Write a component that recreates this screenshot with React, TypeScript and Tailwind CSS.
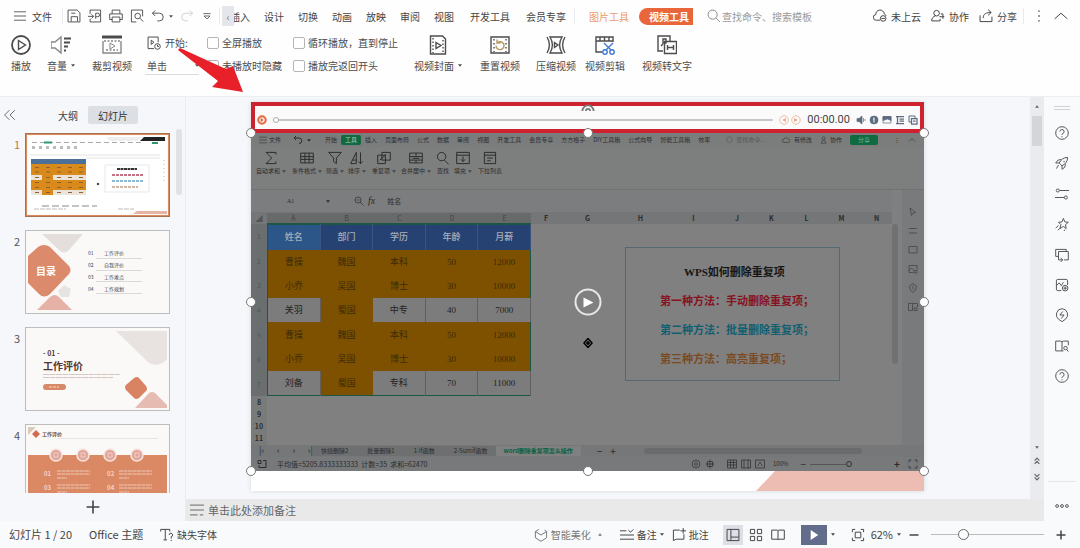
import { useState } from "react";
import type { ReactNode } from "react";
import clsx from "clsx";

type IconProps = { className?: string; children: ReactNode };

const Icon = ({ className, children }: IconProps) => (
  <svg
    viewBox="0 0 20 20"
    fill="none"
    stroke="currentColor"
    strokeWidth="1.4"
    className={clsx("shrink-0", className)}
    aria-hidden="true"
  >
    {children}
  </svg>
);

const Caret = ({ className }: { className?: string }) => (
  <svg viewBox="0 0 6 4" fill="currentColor" className={clsx("h-[3px] w-1 shrink-0", className)} aria-hidden="true">
    <path d="M0 0h6L3 4z" />
  </svg>
);

const Divider = () => <span className="h-4 w-px shrink-0 bg-[#e8eaed]" />;

const tabs = ["设计", "切换", "动画", "放映", "审阅", "视图"];

function MenuBar() {
  return (
    <nav className="flex h-8 items-center whitespace-nowrap">
      <button className="flex w-[62px] items-center gap-1.5 pl-3.5">
        <Icon className="h-3 w-3">
          <path d="M0 3h20M0 10h20M0 17h20" />
        </Icon>
        文件
      </button>
      <Divider />
      <div className="flex items-center gap-[7px] pl-1 text-[#555]">
        <button aria-label="保存">
          <Icon className="h-3.5 w-3.5">
            <path d="M1.500 1.500h13l4 4v13h-17zM6 18v-7h9v7M6 6h6" />
          </Icon>
        </button>
        <button aria-label="输出为PDF">
          <Icon className="h-3.5 w-3.5">
            <path d="M3 7V1.500h15v17H3V14M0 10.500h8M5 7.500l3 3-3 3M11 14V6h3a2 2 0 0 1 0 5h-3" />
          </Icon>
        </button>
        <button aria-label="打印">
          <Icon className="h-3.5 w-3.5">
            <path d="M4.500 7V1.500h11V7M4.500 15H1V7h18v8h-3.500M4.500 11.500h11v7h-11z" />
          </Icon>
        </button>
        <button aria-label="打印预览">
          <Icon className="h-3.5 w-3.5">
            <path d="M9 18.500H2v-17h16v9" />
            <circle cx="11" cy="10" r="4" />
            <path d="M14 13l5 5" />
          </Icon>
        </button>
        <button aria-label="撤销" className="flex items-center gap-1">
          <Icon className="h-3.5 w-3.5">
            <path d="M6 2L2 6l4 4M2 6h10a5.500 5.500 0 0 1 0 11H9" />
          </Icon>
          <Caret />
        </button>
        <button aria-label="恢复" className="text-[#d0d0d0]">
          <Icon className="h-3.5 w-3.5">
            <path d="M14 2l4 4-4 4M18 6H8a5.500 5.500 0 0 0 0 11h3" />
          </Icon>
        </button>
        <button aria-label="自定义快速访问">
          <Icon className="h-3 w-3">
            <path d="M4 6h12M5 10h10l-5 5z" />
          </Icon>
        </button>
      </div>
      <span className="w-1.5" />
      <Divider />
      <button
        aria-label="向左滚动"
        className="relative z-10 ml-0.5 h-5 w-3 shrink-0 bg-[#e4e6eb] text-center text-[#777]"
      >
        ‹
      </button>
      {/* the strip is scrolled a little, so the first tab slides under the arrow */}
      <button className="-ml-1 shrink-0">插入</button>
      <div className="flex gap-3.5 pl-3.5">
        {tabs.map((tab) => (
          <button key={tab}>{tab}</button>
        ))}
      </div>
      <div className="flex gap-4 pr-2 pl-4">
        <button>开发工具</button>
        <button>会员专享</button>
      </div>
      <Divider />
      <button className="pr-2.5 pl-3.5 text-[#ee9a6d]">图片工具</button>
      <button className="h-[17px] rounded-l-full rounded-r-xs bg-[#e8663a] pr-1 pl-2.5 font-bold text-white">
        视频工具
      </button>
      <label className="flex items-center gap-px pl-3.5 text-[#888]">
        <Icon className="h-3.5 w-3.5">
          <circle cx="8" cy="8" r="6.500" />
          <path d="M13 13l5.500 5.500" />
        </Icon>
        <input
          aria-label="查找命令、搜索模板"
          placeholder="查找命令、搜索模板"
          className="w-24 bg-transparent outline-none placeholder:text-[#999]"
        />
      </label>
      <div className="ml-auto flex items-center gap-2.5">
        <button className="flex items-center gap-1">
          <Icon className="h-3.5 w-3.5">
            <path d="M10 16H5a4 4 0 0 1-1-8 6 6 0 0 1 12-1c1.500.5 2.500 2 2.500 3" />
            <circle cx="14.500" cy="13.500" r="4" />
            <path d="M12 13.500h5" />
          </Icon>
          未上云
        </button>
        <button className="flex items-center gap-1">
          <Icon className="h-3.5 w-3.5">
            <circle cx="8" cy="6" r="4" />
            <path d="M6 10c-3 1-5 3-5 7h12v-3M14 7h3v7M12 11h7" />
          </Icon>
          协作
        </button>
        <button className="flex items-center gap-1">
          <Icon className="h-3.5 w-3.5">
            <path d="M1.500 9v9h17v-7M6 13c0-6 4-8 11-8M13 1l4.500 4L13 9" />
          </Icon>
          分享
        </button>
      </div>
      <span className="w-1.5" />
      <Divider />
      <button aria-label="更多" className="ml-2">
        <Icon className="h-3.5 w-3.5">
          <path d="M10 2v2M10 9v2M10 16v2" strokeWidth="2" />
        </Icon>
      </button>
      <button aria-label="收起功能区" className="mr-3 ml-2">
        <Icon className="h-3.5 w-3.5">
          <path d="M1 14l9-8 9 8" />
        </Icon>
      </button>
    </nav>
  );
}

type ToolProps = { label: string; width: string; caret?: boolean; children: ReactNode };

const Tool = ({ label, width, caret, children }: ToolProps) => (
  <button className={clsx("flex shrink-0 flex-col items-center gap-[3px] whitespace-nowrap", width)}>
    <Icon className="h-5 w-5">{children}</Icon>
    <span className="flex items-center gap-1">
      {label}
      {caret && <Caret />}
    </span>
  </button>
);

const Check = ({ label }: { label: string }) => (
  <label className="flex items-center gap-[3px] whitespace-nowrap">
    <input type="checkbox" className="h-3 w-3 appearance-none rounded-xs border border-[#b5b5b5] bg-white" />
    {label}
  </label>
);

function Ribbon() {
  return (
    <div className="flex h-16 items-start pt-[3px] text-[#4c4c4c]">
      <Tool label="播放" width="w-[42px]">
        <circle cx="10" cy="10" r="9" strokeWidth="1.800" />
        <path d="M7.500 5.500l7 4.500-7 4.500z" />
      </Tool>
      <Tool label="音量" width="w-[38px]" caret>
        <path d="M0 7h4l6-5v16l-6-5H0z" stroke="#888" />
        <path d="M13 3.500h7M13 7.500h6M13 11.500h4M13 15.500h2" strokeWidth="1.800" />
      </Tool>
      <Tool label="裁剪视频" width="w-[64px]">
        <path d="M0 2h20" strokeWidth="3" />
        <path d="M1 6v12h18V6" stroke="#888" />
        <path d="M2 6h16M4 15h12" strokeDasharray="2 1.500" stroke="#888" />
        <path d="M8 8l5 3-5 3z" strokeWidth="1" stroke="#888" />
      </Tool>
      <div className="flex w-[55px] flex-col gap-2 pl-px">
        <span className="flex items-center gap-1 pl-0.5 whitespace-nowrap">
          <Icon className="h-3.5 w-3.5">
            <path d="M10 18H1.500V1.500H16V9M6 6l4 3-4 3z" />
            <circle cx="15" cy="15" r="4" />
            <path d="M15 12.500V15h2" />
          </Icon>
          <label htmlFor="start">开始:</label>
        </span>
        <span className="flex items-center border-b border-[#dcdcdc] pb-px">
          <select id="start" className="w-full appearance-none bg-transparent pl-0.5 outline-none">
            <option>单击</option>
          </select>
          <Caret />
        </span>
      </div>
      <div className="flex flex-col gap-2 pl-2">
        <Check label="全屏播放" />
        <Check label="未播放时隐藏" />
      </div>
      <div className="flex w-[123px] flex-col gap-2 pl-[11px]">
        <Check label="循环播放，直到停止" />
        <Check label="播放完返回开头" />
      </div>
      <Tool label="视频封面" width="w-[66px]" caret>
        <path d="M2.500 1h12l3 3v15h-15z" />
        <path d="M5 3v15M15 5v13" strokeDasharray="1.500 2" />
        <path d="M8 7.500l5 3-5 3z" />
      </Tool>
      <Tool label="重置视频" width="w-[58px]">
        <path d="M1 2h18v16H1z" />
        <path d="M4 4v13M16 4v13" strokeDasharray="1.500 2.500" />
        <path d="M7.500 7.500a4 4 0 1 1-1.500 3M7 4.500v3.500h3.500" stroke="#b89a62" />
      </Tool>
      <Tool label="压缩视频" width="w-[54px]">
        <path d="M1 2c3 5 3 11 0 16M4 2c3 5 3 11 0 16h12c-3-5-3-11 0-16zM19 2c-3 5-3 11 0 16M8.500 7.500l3.500 2.500-3.500 2.500z" />
      </Tool>
      <Tool label="视频剪辑" width="w-[44px]">
        <path d="M7 17H1V2h17v5M1 6h17M5 2v4M9.500 2v4M14 2v4" />
        <path d="M9 8l7 7M18 8l-7 7" stroke="#3f7ad0" />
        <circle cx="10" cy="17" r="2.200" stroke="#3f7ad0" />
        <circle cx="17" cy="17" r="2.200" stroke="#3f7ad0" />
      </Tool>
      <Tool label="视频转文字" width="w-[80px]">
        <path d="M6 16H1V1h12v5M4 11l2-2M6 4h3v4H6z" />
        <path d="M7.500 6.500h12v12h-12zM10.500 10v5M16.500 10v5M10.500 12.500h6" />
      </Tool>
    </div>
  );
}

type ThumbProps = { index: number; active?: boolean; children: ReactNode };

const Thumb = ({ index, active, children }: ThumbProps) => (
  <li className="flex gap-[5px] pl-3.5">
    <span className={clsx("w-1.5 pt-1 text-[11px]", active ? "text-[#c9704a]" : "text-[#555]")}>{index}</span>
    <div
      className={clsx(
        "relative h-[84px] w-[145px] shrink-0 overflow-hidden border bg-[#fbf9f8]",
        active ? "outline -outline-offset-2 outline-[#d98b5c] border-[#a8724f]" : "border-[#bdbdbd]"
      )}
    >
      {children}
    </div>
  </li>
);

// every slide preview is drawn on a 143 x 82 canvas
const Art = ({ children }: { children: ReactNode }) => (
  <svg viewBox="0 0 143 82" className="absolute inset-0 h-full w-full" aria-hidden="true">
    {children}
  </svg>
);

const agenda = ["工作评价", "自我评价", "工作难点", "工作规划"];

function SlidePanel() {
  return (
    <aside className="flex w-[186px] shrink-0 flex-col border-r border-[#e9ebee]">
      <div className="flex h-9 items-center pl-1">
        <button aria-label="收起窗格" className="w-[46px] text-[#555]">
          <Icon className="h-3 w-3">
            <path d="M9 2l-8 8 8 8M18 2l-8 8 8 8" />
          </Icon>
        </button>
        <button className="pl-2">大纲</button>
        <button className="ml-2.5 h-[18px] rounded-xs bg-[#dcdfe4] px-2.5 text-[#333]">幻灯片</button>
      </div>
      <div className="flex min-h-0 flex-1">
        <ul className="flex w-[174px] flex-col gap-[13px] overflow-hidden">
          <Thumb index={1} active>
            <Art>
              <path d="M2 2h139v78H2z" fill="#fff" />
              <path d="M80 3h37l-6 4H84z" fill="#eee" />
              <path d="M118 3h21v4h-25z" fill="#222" />
              <path d="M6 8.500h110" stroke="#aaa" strokeDasharray="5 3" strokeWidth="1" />
              <path d="M18 8.500h8M126 9h6" stroke="#2c9a6b" strokeWidth="2" />
              <path d="M6 13.500h48" stroke="#bbb" strokeDasharray="3 4" strokeWidth="3" />
              <path d="M4 21h130M60 24h74" stroke="#e4e4e4" />
              <path d="M5 25h55v5H5z" fill="#4c7097" />
              <path d="M5 30h55v31H5z" fill="#d98a1b" />
              <path d="M5 41h11v5H5zM27 41h33v5H27zM5 56h11v5H5zM27 56h33v5H27z" fill="#ece4d8" />
              <path d="M9 33.500h48M9 38h48M9 43.500h48M9 48.500h48M9 53.500h48M9 58.500h48" stroke="#8b6233" strokeDasharray="4 7" />
              <path d="M79 31h44v27H79z" fill="#fff" stroke="#e1e9ed" />
              <path d="M91 35h20" stroke="#333" strokeDasharray="3 .5" strokeWidth="2" />
              <path d="M86 41h31" stroke="#b0455b" strokeDasharray="3 1" strokeWidth="1.500" />
              <path d="M86 47h31" stroke="#63a3bf" strokeDasharray="3 1" strokeWidth="1.500" />
              <path d="M86 53h26" stroke="#c2a187" strokeDasharray="3 1" strokeWidth="1.500" />
              <circle cx="72" cy="50" r="1.200" fill="#444" />
              <path d="M16 72h55" stroke="#888" strokeDasharray="7 3" />
              <path d="M8 75h32M92 75h16" stroke="#bbb" strokeDasharray="5 1" />
              <path d="M138 26v22" stroke="#bbb" strokeDasharray="1 3" />
              <path d="M111 77h30v3h-34z" fill="#e5b4a4" />
            </Art>
          </Thumb>
          <Thumb index={2}>
            <Art>
              <path d="M16 3h41L42 20q-4 3-8 0z" fill="#e4dfdd" />
              <path d="M2 25l10-9q6-4 12 0l19 19q3 4 0 8L24 63q-6 5-11 0L2 52z" fill="#db8a6b" />
              <path d="M32 60l6-6 7 4-2 8h-8z" fill="#e7e3e0" />
              <path d="M11 79l13-13q5-4 9 0l13 13z" fill="#e6b2a8" />
              <path d="M70 27.500h46M70 39.500h46M70 50.500h46M70 62.500h46" stroke="#cfcac7" strokeWidth=".7" />
            </Art>
            <p className="absolute top-8 left-2.5 font-bold text-white">目录</p>
            <ol className="absolute top-[18px] left-[62px] flex flex-col gap-1 text-[5px]/2">
              {agenda.map((item, i) => (
                <li key={item} className="flex gap-2.5">
                  <span className="w-1.5">0{i + 1}</span>
                  {item}
                </li>
              ))}
            </ol>
          </Thumb>
          <Thumb index={3}>
            <Art>
              <path d="M90 3h51v28q-8 9-18 4z" fill="#e8e2e0" />
              <path d="M100 57l8-7q3-2 5 0l7 8q2 3 0 5l-7 7q-3 2-5 0l-8-8q-2-3 0-5z" fill="#d98363" />
              <path d="M109 80l14-15q3-2 6 0l12 12v3z" fill="#e6bcb2" />
              <path d="M17 46.500h77M17 49.500h70" stroke="#cbb9b2" strokeWidth=".8" strokeDasharray="6 .5" />
              <rect x="17" y="56" width="23" height="6" rx="3" fill="#d78968" />
              <path d="M23 59h10" stroke="#f3d9cd" strokeDasharray="3 1" />
            </Art>
            <div className="absolute top-5 left-[17px] text-[#553630]">
              <p className="text-[7px]/[10px] font-bold">- 01 -</p>
              <p className="font-bold">工作评价</p>
            </div>
          </Thumb>
          <Thumb index={4}>
            <Art>
              <path d="M2 30h139v52H2z" fill="#db8865" />
              <path d="M2 2h8L2 10z" fill="#dbc9b9" />
              <path d="M6 9l4-4 4 4-4 4z" fill="#d46a4e" />
              <path d="M32 13.500h100" stroke="#ddd" strokeWidth=".7" />
              {[30, 57, 84, 111].map((cx) => (
                <g key={cx}>
                  <circle cx={cx} cy="30" r="6" fill="#e2a79c" stroke="#f6e6df" strokeWidth="1.500" />
                  <path d={`M${cx - 2} 28h4v4h-4z`} stroke="#f4dcd5" fill="none" strokeWidth=".7" />
                </g>
              ))}
              <path
                d="M31 46h33M31 49h33M31 53h10M93 46h33M93 49h33M93 53h10M31 60h33M31 63h33M93 60h33M93 63h33M31 67h10M93 67h10"
                stroke="#efc9b8"
                strokeDasharray="4 .5"
              />
            </Art>
            <p className="absolute top-1 left-4 text-[5px]/[10px] font-bold text-[#664a44]">工作评价</p>
            <div className="absolute top-11 left-[18px] grid grid-cols-2 gap-x-14 gap-y-1 text-[6px]/[10px] font-bold text-[#f3d3c5]">
              <span>01</span>
              <span>02</span>
              <span>03</span>
              <span>04</span>
            </div>
          </Thumb>
        </ul>
        <span className="-mt-1 ml-0.5 h-[66px] w-1.5 rounded-full bg-[#e0e2e5]" />
      </div>
      <button aria-label="新建幻灯片" className="flex h-7 items-center justify-center text-[#444]">
        <Icon className="h-4 w-4">
          <path d="M10 2v16M2 10h16" strokeWidth="2" />
        </Icon>
      </button>
    </aside>
  );
}

const sheetTabs = ["开始", "工具", "插入", "页面布局", "公式", "数据", "审阅", "视图", "开发工具", "会员专享", "方方格子", "DIY工具箱", "公式向导", "智能工具箱", "效率"];

const sheetTools = [
  { label: "自动求和", width: "w-9", caret: true, path: "M17 5V2H3l8 8-8 8h14v-3" },
  { label: "条件格式", width: "w-9", caret: true, path: "M1 3h18v14H1zM1 8h18M1 12h18M7 3v14M13 3v14" },
  { label: "筛选", width: "w-5", caret: true, path: "M1 2h18l-7 8v8l-4-3v-5z" },
  { label: "排序", width: "w-6", caret: true, path: "M1 18L9 2v16zM4 13h5M15 2v16M12 15l3 3 3-3" },
  { label: "重复项", width: "w-[30px]", caret: true, path: "M1 6h11v12H1zM7 2h12v11H7zM4 13l9-8" },
  { label: "合并居中", width: "w-[34px]", caret: true, path: "M1 3h18v14H1zM1 8h18M1 13h18M10 3v5M10 13v4M5 10.500h10" },
  { label: "查找", width: "w-5", caret: false, path: "M14 8A6 6 0 1 1 2 8a6 6 0 0 1 12 0zM12 13l6 6" },
  { label: "填充", width: "w-5", caret: true, path: "M1 2h18v16H1zM1 6h18M10 8v7M7 12l3 3 3-3" },
  { label: "下拉列表", width: "w-[34px]", caret: false, path: "M2 2h16v16H2zM2 6h16M6 10h8M6 14h5" },
];

const columns = [
  { name: "A", width: "w-[53px]" },
  { name: "B", width: "w-[53px]" },
  { name: "C", width: "w-[53px]" },
  { name: "D", width: "w-[52px]" },
  { name: "E", width: "w-[53px]" },
  { name: "F", width: "w-[30px]" },
  { name: "G", width: "w-[53px]" },
  { name: "H", width: "w-[53px]" },
  { name: "I", width: "w-[53px]" },
  { name: "J", width: "w-[34px]" },
  { name: "K", width: "w-[35px]" },
  { name: "L", width: "w-[35px]" },
  { name: "M", width: "w-[35px]" },
  { name: "N", width: "w-[35px]" },
];

const people = [
  { cells: ["曹操", "魏国", "本科", "50", "12000"], marked: true },
  { cells: ["小乔", "吴国", "博士", "30", "10000"], marked: true },
  { cells: ["关羽", "蜀国", "中专", "40", "7000"], marked: false },
  { cells: ["曹操", "魏国", "本科", "50", "12000"], marked: true },
  { cells: ["小乔", "吴国", "博士", "30", "10000"], marked: true },
  { cells: ["刘备", "蜀国", "专科", "70", "11000"], marked: false },
];

const sideIcons = [
  "M4 2l11 9-5 1-3 5z",
  "M2 5h16M2 14h16",
  "M2 3h16v13H2z",
  "M2 3h16v8M2 3v14h8M2 12l5-4 4 4M12 13h6v5h-6z",
  "M10 1l7 5-2 8-5 5-5-5-2-8zM10 5v8",
  "M1 3h8v14H1zM9 3h10v7M12 12h6v5h-6z",
];

function VideoFrame() {
  return (
    <section className="relative bg-[#808080] text-[6px]/[10px] whitespace-nowrap text-[#2c2c2c]">
      <div className="flex h-3.5 items-center gap-2 overflow-hidden bg-[#7b7d7d] pl-2">
        <span className="flex items-center gap-0.5">
          <Icon className="h-2 w-2">
            <path d="M0 3h20M0 10h20M0 17h20" />
          </Icon>
          文件
        </span>
        <span className="flex w-7 items-center gap-1 pl-1">
          <Icon className="h-2.5 w-2.5">
            <path d="M6 2L2 6l4 4M2 6h10a5 5 0 0 1 0 11" strokeWidth="2" />
          </Icon>
          <Caret />
        </span>
        {sheetTabs.map((tab) => (
          <span key={tab} className={clsx(tab === "工具" && "-mx-1 rounded-xs bg-[#0f6a41] px-1 text-[#b9c9c0]")}>
            {tab}
          </span>
        ))}
        <span className="flex items-center gap-0.5 pl-2 text-[#555]">
          <Icon className="h-2 w-2">
            <circle cx="9" cy="9" r="7" />
          </Icon>
          查找命令...
        </span>
        <Icon className="-mr-1 ml-auto h-2 w-2">
          <path d="M5 16a4 4 0 0 1 0-8 6 6 0 0 1 11 0 4 4 0 0 1 0 8z" />
        </Icon>
        <span>有修改</span>
        <Icon className="-mr-1.5 h-2 w-2">
          <circle cx="9" cy="6" r="4" />
          <path d="M3 18c0-9 12-9 12 0z" />
        </Icon>
        <span>协作</span>
        <span className="rounded-xs bg-[#0f6a41] px-2 text-[#7fae96]">分享</span>
        <span className="pl-2">⋮</span>
        <Icon className="mr-2 h-2 w-2">
          <path d="M2 14l8-8 8 8" />
        </Icon>
      </div>
      <div className="flex h-[43px] items-start border-b border-[#6f7172] bg-[#7d7e7e] pt-1 pl-0.5">
        {sheetTools.map((tool) => (
          <div key={tool.label} className={clsx("flex shrink-0 flex-col items-center gap-px", tool.width)}>
            <Icon className="h-3.5 w-3.5">
              <path d={tool.path} />
            </Icon>
            <span className="flex items-center gap-0.5">
              {tool.label}
              {tool.caret && <Caret className="text-[#444]" />}
            </span>
          </div>
        ))}
      </div>
      <div className="flex">
        <div className="min-w-0 flex-1">
          <div className="flex h-[22px] items-center bg-[#7b7d7e]">
            <span className="w-[75px] pl-9 font-[Liberation_Serif]">A1</span>
            <Caret />
            <Icon className="ml-6 h-2.5 w-2.5">
              <circle cx="8" cy="8" r="6" />
              <path d="M12 12l7 7M5 8h6" />
            </Icon>
            <i className="pl-1 font-[Liberation_Serif] text-[10px]">fx</i>
            <span className="pl-3 text-[7px]">姓名</span>
          </div>
          <div className="flex h-3 items-center overflow-hidden bg-[#747677] text-[7px]">
            <span className="w-4 shrink-0 text-center text-[#555]">◢</span>
            {columns.map((col, i) => (
              <span
                key={col.name}
                className={clsx(
                  "shrink-0 text-center",
                  col.width,
                  i < 5 ? "border-b border-[#1b5747] bg-[#686a6a] text-[#444]" : "font-bold"
                )}
              >
                {col.name}
              </span>
            ))}
          </div>
          <div className="flex h-[221px]">
            <ol className="w-4 shrink-0 bg-[#797b7b] text-center text-[7px]">
              <li className="flex h-[172px] flex-col justify-around bg-[#6b6e6e] text-[#4a5a58]">
                {[1, 2, 3, 4, 5, 6, 7].map((row) => (
                  <span key={row}>{row}</span>
                ))}
              </li>
              {[8, 9, 10, 11].map((row) => (
                <li key={row} className="h-3 leading-3 font-bold">
                  {row}
                </li>
              ))}
            </ol>
            <table className="h-[172px] w-[264px] shrink-0 table-fixed border-collapse border border-[#1b5747] text-center font-[Liberation_Serif,Noto_Sans_CJK_SC] text-[9px]/3">
              <thead>
                <tr className="h-[25px] bg-[#264272] text-[#a9b0bb]">
                  {["姓名", "部门", "学历", "年龄", "月薪"].map((head, i) => (
                    <th key={head} className={clsx("border-r border-[#3b5480] font-medium", i === 0 && "bg-[#2b5687]")}>
                      {head}
                    </th>
                  ))}
                </tr>
              </thead>
              <tbody>
                {people.map((person, row) => (
                  <tr key={row} className="h-6">
                    {person.cells.map((cell, i) => (
                      <td
                        key={i}
                        className={clsx(
                          person.marked || i === 1
                            ? "bg-[#7e5100] text-[#3c2a08]"
                            : "border-r border-[#606060] bg-[#7c7c7c] text-[#222]"
                        )}
                      >
                        {cell}
                      </td>
                    ))}
                  </tr>
                ))}
              </tbody>
            </table>
            <div className="min-w-0 flex-1 pt-[23px] pl-[94px]">
              <div className="flex h-[134px] w-[215px] flex-col items-start gap-[13px] border border-[#566873] pt-4 pl-[34px] font-[Liberation_Serif,Noto_Sans_CJK_SC] text-[11px]/4 font-bold">
                <p className="pl-6 text-[#161616]">WPS如何删除重复项</p>
                <p className="text-[#86121f]">第一种方法：手动删除重复项；</p>
                <p className="text-[#105f70]">第二种方法：批量删除重复项；</p>
                <p className="text-[#7b4a22]">第三种方法：高亮重复项；</p>
              </div>
            </div>
          </div>
        </div>
        <span className="mt-[34px] h-[140px] w-1.5 rounded-full bg-[#707173]" />
        <div className="ml-1 flex w-[22px] flex-col items-center gap-[9px] bg-[#787a7c] pt-[17px] text-[#3d3d3d]">
          {sideIcons.map((path) => (
            <Icon key={path} className="h-2.5 w-2.5">
              <path d={path} />
            </Icon>
          ))}
        </div>
      </div>
      <div className="flex h-3 items-center bg-[#757778] pl-2">
        <span className="flex w-[54px] justify-between text-[9px]">
          <span>|‹</span>
          <span>‹</span>
          <span>›</span>
          <span>›|</span>
        </span>
        <div className="flex gap-[19px] bg-[#6d6f70] px-2">
          <span>快捷删除2</span>
          <span>批量删除1</span>
          <span>1-If函数</span>
          <span>2-Sumif函数</span>
        </div>
        <span className="bg-[#808080] px-2 font-bold text-[#0d5f3a]">word删除重复项怎么操作</span>
        <span className="pl-4 text-[10px]">−</span>
        <span className="pl-2 text-[10px]">+</span>
        <span className="mr-[62px] ml-7 h-1.5 flex-1 rounded-full bg-[#696b6c]" />
      </div>
      <div className="flex h-3.5 items-center justify-between bg-[#77797a] px-1.5">
        <div className="flex items-center gap-2.5 text-[7px]">
          <Icon className="h-2.5 w-2.5">
            <path d="M2 3h6v6H2zM12 3h6v14H4v-5" strokeWidth="2" />
          </Icon>
          平均值=5205.8333333333 &nbsp;计数=35 &nbsp;求和=62470
        </div>
        <div className="flex items-center gap-1">
          <Icon className="h-2.5 w-2.5">
            <circle cx="10" cy="10" r="8" />
            <circle cx="10" cy="10" r="3" />
          </Icon>
          <Icon className="mr-2 h-2.5 w-2.5">
            <path d="M10 1v18M1 10h18M5 5h10v10H5z" />
          </Icon>
          <Icon className="h-2.5 w-2.5">
            <path d="M1 2h18v16H1zM1 7h18M1 12h18M7 2v16M13 2v16" />
          </Icon>
          <Icon className="h-2.5 w-2.5">
            <path d="M1 2h18v16H1zM6 2v16M14 2v16" />
          </Icon>
          <Icon className="mr-1 h-2.5 w-2.5">
            <path d="M1 2h18v16H1zM5 14l5-8 5 8" />
          </Icon>
          <span>100%</span>
          <span className="pl-2 text-[10px]">−</span>
          <span className="flex w-20 items-center">
            <span className="h-px w-9 bg-[#555]" />
            <span className="h-1.5 w-1.5 rounded-full border border-[#333]" />
          </span>
          <span className="text-[10px] font-bold">+</span>
          <Icon className="ml-1 h-2.5 w-2.5">
            <path d="M2 7V2h5M13 2h5v5M18 13v5h-5M7 18H2v-5" />
          </Icon>
        </div>
      </div>
      <button
        aria-label="播放视频"
        className="absolute top-1/2 left-1/2 flex h-[27px] w-[27px] -translate-1/2 items-center justify-center rounded-full border-2 border-[#e8e8e8] text-white"
      >
        <svg viewBox="0 0 12 12" fill="currentColor" className="h-3 w-3" aria-hidden="true">
          <path d="M2 1l10 5-10 5z" />
        </svg>
      </button>
      <Icon className="absolute top-[205px] left-1/2 h-2.5 w-2.5 -translate-x-1/2 text-black">
        <path d="M10 1l8 9-8 9-8-9zM10 6v8M6 10h8" strokeWidth="3" />
      </Icon>
    </section>
  );
}

const handles = [
  "top-0 left-0",
  "top-0 left-1/2",
  "top-0 left-full",
  "top-1/2 left-0",
  "top-1/2 left-full",
  "top-full left-0",
  "top-full left-1/2",
  "top-full left-full",
];

function PlayerBar() {
  return (
    <div className="relative flex h-[31px] items-center gap-1.5 border-4 border-[#ce2231] bg-[#fafafa] px-0.5 pt-1 text-[#5d6b80]">
      {/* rotation handle of the selected video */}
      <Icon className="absolute -top-0.5 left-1/2 h-3.5 w-3.5 -translate-x-1/2 text-[#777]">
        <path d="M2 10a8 8 0 0 1 16 0M7 10a3 3 0 0 1 6 0" strokeWidth="2.500" />
      </Icon>
      <button aria-label="播放" className="text-[#e26a42]">
        <Icon className="h-2.5 w-2.5">
          <circle cx="10" cy="10" r="7.500" strokeWidth="4" fill="#fbe3d9" />
          <path d="M8 7l4 3-4 3z" fill="currentColor" />
        </Icon>
      </button>
      <input
        type="range"
        aria-label="播放进度"
        defaultValue={0}
        className="h-0.5 min-w-0 flex-1 appearance-none rounded-full bg-[#c4c6c9] [&::-webkit-slider-thumb]:h-1.5 [&::-webkit-slider-thumb]:w-1.5 [&::-webkit-slider-thumb]:appearance-none [&::-webkit-slider-thumb]:rounded-full [&::-webkit-slider-thumb]:border [&::-webkit-slider-thumb]:border-[#aaa] [&::-webkit-slider-thumb]:bg-white"
      />
      <div className="flex gap-0.5 text-[#e9a284]">
        <button aria-label="后退">
          <Icon className="h-2.5 w-2.5">
            <circle cx="10" cy="10" r="8.500" />
            <path d="M13 7l-5 3 5 3z" fill="currentColor" />
          </Icon>
        </button>
        <button aria-label="前进">
          <Icon className="h-2.5 w-2.5">
            <circle cx="10" cy="10" r="8.500" />
            <path d="M7 7l5 3-5 3z" fill="currentColor" />
          </Icon>
        </button>
      </div>
      <span className="font-[Roboto] text-[11px] text-[#444]">00:00.00</span>
      <div className="flex gap-[3px]">
        <button aria-label="音量">
          <Icon className="h-2.5 w-2.5">
            <path d="M2 7h4l6-5v16l-6-5H2z" fill="currentColor" />
            <path d="M15 6v8M18 8v4" />
          </Icon>
        </button>
        <button aria-label="信息">
          <Icon className="h-2.5 w-2.5">
            <circle cx="10" cy="10" r="8" fill="currentColor" />
            <path d="M10 5v10M8 8h2" stroke="#fff" strokeWidth="2" />
          </Icon>
        </button>
        <button aria-label="封面">
          <Icon className="h-2.5 w-2.5">
            <path d="M2 3h16v13H2z" />
            <path d="M2 3h16v8l-7-3-9 3z" fill="currentColor" />
          </Icon>
        </button>
        <button aria-label="裁剪">
          <Icon className="h-2.5 w-2.5">
            <path d="M2 3h16M5 3v14M9 8h9M9 12h9M2 17h16" strokeWidth="2.500" />
          </Icon>
        </button>
        <button aria-label="复制">
          <Icon className="h-2.5 w-2.5">
            <path d="M6 14H2V2h12v4" strokeWidth="2" />
            <path d="M7 7h11v11H7zM10 12h5" strokeWidth="2.500" />
          </Icon>
        </button>
      </div>
    </div>
  );
}

function Stage() {
  return (
    <div className="flex min-w-0 flex-1 flex-col">
      <div className="flex min-h-0 flex-1">
        <div className="min-w-0 flex-1 pt-[5px] pr-[106px] pl-[65px]">
          <div className="bg-white shadow-[0_0_4px_#d5d7da]">
            <PlayerBar />
            <div className="relative">
              <VideoFrame />
              {handles.map((place) => (
                <span
                  key={place}
                  className={clsx("absolute h-2.5 w-2.5 -translate-1/2 rounded-full border border-[#777] bg-white", place)}
                />
              ))}
            </div>
            <svg viewBox="0 0 168 20" className="ml-auto h-5 w-[168px]" aria-hidden="true">
              <path d="M19 0h149v20H0z" fill="#edbdb4" />
            </svg>
          </div>
        </div>
        <div className="flex w-3.5 flex-col items-center justify-between bg-[#e9ebef] pt-2 pb-[18px] text-[#666]">
          <div className="flex flex-col items-center gap-2">
            <Caret className="rotate-180" />
            <span className="h-[30px] w-2.5 bg-[#d3d5d8]" />
          </div>
          <div className="flex flex-col items-center gap-2">
            <Caret />
            <Icon className="h-2 w-2">
              <path d="M4 9l6-6 6 6M4 17l6-6 6 6" strokeWidth="3" />
            </Icon>
            <Icon className="h-2 w-2">
              <path d="M4 3l6 6 6-6M4 11l6 6 6-6" strokeWidth="3" />
            </Icon>
          </div>
        </div>
      </div>
      <label className="flex h-[22px] items-center gap-1 bg-[#e9e9ea] pl-1 text-[#666]">
        <Icon className="h-3.5 w-3.5">
          <path d="M0 3h20M0 10h20M0 17h11M14 17h5" />
        </Icon>
        <input
          aria-label="备注"
          placeholder="单击此处添加备注"
          className="w-full bg-transparent text-[11px] outline-none placeholder:text-[#666]"
        />
      </label>
    </div>
  );
}

const dock = [
  {
    name: "帮助",
    art: <path d="M19 10a9 9 0 1 1-18 0 9 9 0 0 1 18 0zM7 8a3 3 0 1 1 4 2.800c-1 .5-1 1-1 2M10 14.500v1.500" />,
  },
  {
    name: "快捷",
    art: <path d="M18 2c-6 0-9 3-12 8l4 4c5-3 8-6 8-12zM9 5L4 6 1 10h5M15 11l-1 5-4 3v-5M5 13l-3 5M12 8h2" />,
  },
  {
    name: "属性",
    art: (
      <>
        <circle cx="4" cy="5" r="2.200" />
        <path d="M6.500 5H20M0 15h13" />
        <circle cx="15.500" cy="15" r="2.200" />
      </>
    ),
  },
  {
    name: "动画",
    art: <path d="M12 2l2 5 5 .500-4 3.500 1 5.500-4-3-5 3 1.500-5.500L5 7.500 10 7zM5 12l-4 4M7 16l-3 3M14 18l-1 2" />,
  },
  {
    name: "切换",
    art: <path d="M5 12H1V2h15v3M5 5h14v12h-6M5 5v12h6M8 14l3 3-3 3" />,
  },
  {
    name: "图片",
    art: (
      <>
        <path d="M9 18H4q-2 0-2-2V4q0-2 2-2h12q2 0 2 2v6M2 11l4-4 3 4 3-5" />
        <circle cx="14.500" cy="14.500" r="4" />
        <path d="M12 14.500h5M14.500 12v5" />
      </>
    ),
  },
  {
    name: "闪电",
    art: <path d="M10 1a8.500 8.500 0 0 1 5 15l-5 3.500L5 16a8.500 8.500 0 0 1 5-15zM11 5l-4 5h6l-4 5" />,
  },
  {
    name: "素材",
    art: (
      <>
        <path d="M10 17V4L8 3H1v14h9M10 4l2-1h7v6M10 17h2" />
        <circle cx="15" cy="13" r="2.500" />
        <path d="M17 15l2 3" />
      </>
    ),
  },
  {
    name: "关于",
    art: <path d="M19 10a9 9 0 1 1-18 0 9 9 0 0 1 18 0zM7 8a3 3 0 1 1 4 2.800c-1 .5-1 1-1 2M10 14.500v1.500" />,
  },
];

function Dock() {
  return (
    <aside className="flex w-9 shrink-0 flex-col items-center justify-between bg-[#f9fafb] text-[#555]">
      <div className="flex flex-col items-center gap-4 pt-[9px]">
        <span className="h-1 w-4 border-y border-[#cfd1d4]" />
        <div className="flex h-[257px] flex-col justify-between">
          {dock.map((item) => (
            <button key={item.name} aria-label={item.name}>
              <Icon className="h-3.5 w-3.5">{item.art}</Icon>
            </button>
          ))}
        </div>
      </div>
      <button aria-label="更多工具" className="flex h-10 w-7 items-center justify-center border-t border-[#e3e5e8] pt-2">
        <Icon className="h-3.5 w-3.5">
          <circle cx="3" cy="10" r="2" />
          <circle cx="10" cy="10" r="2" />
          <circle cx="17" cy="10" r="2" />
        </Icon>
      </button>
    </aside>
  );
}

function StatusBar() {
  const [zoom, setZoom] = useState(62);

  return (
    <footer className="flex h-[27px] shrink-0 items-center bg-[#f8fafc] whitespace-nowrap">
      <span className="w-20 pl-[9px] text-[11px]">幻灯片 1 / 20</span>
      <span className="w-20 pl-[9px] text-[11px]">Office 主题</span>
      <button className="flex items-center gap-[3px]">
        <Icon className="h-3.5 w-3.5">
          <path d="M1 5V2h13v3M7.500 2v15M5 17h5M13 10a2.500 2.500 0 1 1 3 2.500V15M16 17v1.500" />
        </Icon>
        缺失字体
      </button>
      <div className="ml-auto flex items-center">
        <button className="flex items-center gap-[3px] text-[#777]">
          <Icon className="h-3.5 w-3.5">
            <path d="M7 2L2 5v9l8 5 8-5V5l-3-2M2 5l8 5 8-5" />
          </Icon>
          智能美化
          <Caret className="ml-1 rotate-180" />
        </button>
        <button className="ml-[18px] flex items-center gap-[3px]">
          <Icon className="h-3.5 w-3.5">
            <path d="M0 4h9M0 10h20M0 16h20M12 3l3 3 4-4" />
          </Icon>
          备注
          <Caret />
        </button>
        <button className="ml-2 flex items-center gap-[3px]">
          <Icon className="h-3.5 w-3.5">
            <path d="M11 3H2v15l4-2h11V9M16 0v8M12 4h8" />
          </Icon>
          批注
        </button>
        <button aria-label="普通视图" className="ml-3.5 flex h-5 w-5 items-center justify-center bg-[#dcdfe6]">
          <Icon className="h-3.5 w-3.5">
            <path d="M1.500 2h17v16h-17zM7 2v16M7 13h11" />
          </Icon>
        </button>
        <button aria-label="幻灯片浏览" className="ml-1.5">
          <Icon className="h-3.5 w-3.5">
            <path d="M2 2h6v6H2zM12 2h6v6h-6zM2 12h6v6H2zM12 12h6v6h-6z" />
          </Icon>
        </button>
        <button aria-label="阅读视图" className="ml-2">
          <Icon className="h-3.5 w-3.5">
            <path d="M1 3h8l1 1 1-1h8v13h-8l-1 1-1-1H1zM10 4v13" />
          </Icon>
        </button>
        <button aria-label="放映" className="ml-4 flex h-5 w-[26px] items-center justify-center bg-[#626d8c] text-white">
          <svg viewBox="0 0 12 12" fill="currentColor" className="h-2.5 w-2.5" aria-hidden="true">
            <path d="M2 0l9 6-9 6z" />
          </svg>
        </button>
        <Caret className="ml-1" />
        <button aria-label="最佳显示比例" className="ml-4">
          <Icon className="h-3.5 w-3.5">
            <path d="M2 6V2h4M14 2h4v4M18 14v4h-4M6 18H2v-4M6 6h8v8H6z" />
          </Icon>
        </button>
        <span className="ml-1.5 text-[11px]">{zoom}%</span>
        <Caret className="ml-1" />
        <button aria-label="缩小" className="ml-2" onClick={() => setZoom(zoom - 1)}>
          <Icon className="h-2.5 w-2.5">
            <path d="M1 10h18" strokeWidth="3" />
          </Icon>
        </button>
        <input
          type="range"
          aria-label="显示比例"
          min={10}
          max={210}
          value={zoom}
          onChange={(e) => setZoom(Number(e.target.value))}
          className="ml-3 h-px w-[113px] appearance-none bg-[#bbb] [&::-webkit-slider-thumb]:h-[11px] [&::-webkit-slider-thumb]:w-[11px] [&::-webkit-slider-thumb]:appearance-none [&::-webkit-slider-thumb]:rounded-full [&::-webkit-slider-thumb]:border [&::-webkit-slider-thumb]:border-[#666] [&::-webkit-slider-thumb]:bg-white"
        />
        <button aria-label="放大" className="mr-3.5 ml-3" onClick={() => setZoom(zoom + 1)}>
          <Icon className="h-2.5 w-2.5">
            <path d="M1 10h18M10 1v18" strokeWidth="3" />
          </Icon>
        </button>
      </div>
    </footer>
  );
}

export default function App() {
  return (
    <div className="relative flex h-screen flex-col overflow-hidden bg-[#f5f7fa] font-[Noto_Sans_CJK_SC,sans-serif] text-[10px]/[15px] text-[#444]">
      <header className="shrink-0 border-b border-[#eceef1] bg-[#fefefe]">
        <MenuBar />
        <Ribbon />
      </header>
      <main className="flex min-h-0 flex-1">
        <SlidePanel />
        <Stage />
        <Dock />
      </main>
      <StatusBar />
      <svg viewBox="0 0 66 44" className="pointer-events-none absolute top-12 left-[178px] h-11 w-[66px]" aria-hidden="true">
        <path d="M2 0l46 21 7-3 10 26-31-5 6-6L0 2z" fill="#e8202a" />
      </svg>
    </div>
  );
}
